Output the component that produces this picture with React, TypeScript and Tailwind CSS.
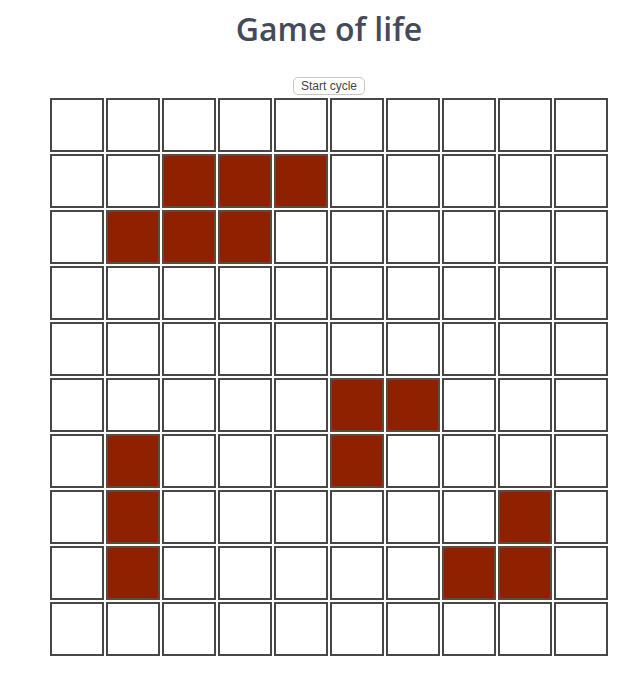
import { useState } from "react";

const SIZE = 10;

const initial: [number, number][] = [
  [1, 2], [1, 3], [1, 4],
  [2, 1], [2, 2], [2, 3],
  [5, 5], [5, 6],
  [6, 1], [6, 5],
  [7, 1], [7, 8],
  [8, 1], [8, 7], [8, 8],
];

function makeGrid() {
  const g = Array.from({ length: SIZE }, () => Array(SIZE).fill(false));
  initial.forEach(([r, c]) => (g[r][c] = true));
  return g as boolean[][];
}

export default function App() {
  const [grid, setGrid] = useState(makeGrid);

  function toggle(r: number, c: number) {
    setGrid((g) => g.map((row, i) => row.map((v, j) => (i === r && j === c ? !v : v))));
  }

  return (
    <div className="min-h-screen bg-white" style={{ fontFamily: "'Open Sans', 'Noto Sans', sans-serif" }}>
      <div className="ml-[49px] w-[560px]">
        <h1 className="pt-[10px] text-center text-[32px] font-semibold leading-[38px] text-[#454a5a]">Game of life</h1>
        <div className="mt-[29px] flex justify-center">
          <button
            className="h-[18px] rounded-[5px] border border-[#c8c8c8] bg-white px-[7px] text-[12px] leading-[16px] text-[#444]"
            style={{ fontFamily: "'Liberation Sans', Arial, sans-serif" }}
          >
            Start cycle
          </button>
        </div>
        <div className="mt-[2px] flex flex-col">
          {grid.map((row, r) => (
            <div key={r} className="flex">
              {row.map((alive, c) => (
                <div
                  key={c}
                  onClick={() => toggle(r, c)}
                  className={
                    "m-px h-[54px] w-[54px] border-2 " +
                    (alive ? "border-[#5a4a48] bg-[#8f2000]" : "border-[#474747] bg-white")
                  }
                />
              ))}
            </div>
          ))}
        </div>
      </div>
    </div>
  );
}
